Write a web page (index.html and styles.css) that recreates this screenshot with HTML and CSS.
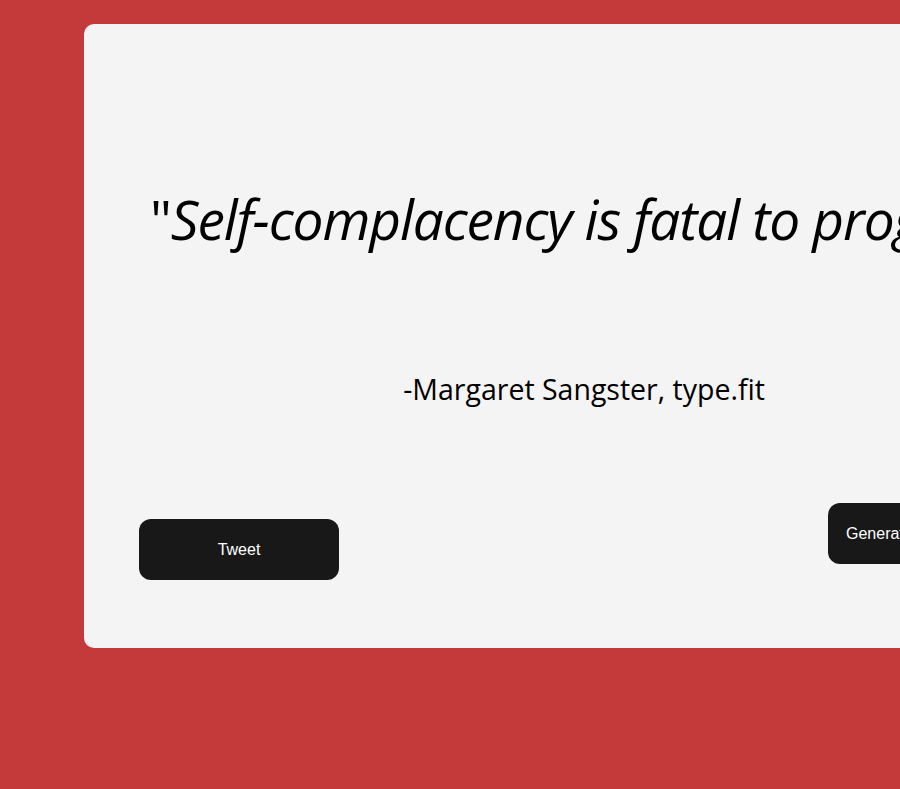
FILE: index.html
```html
<!DOCTYPE html>
<html lang="en">
<head>
<meta charset="utf-8">
<title>Random Quote</title>
<link rel="stylesheet" href="styles.css">
</head>
<body>
  <main class="card">
    <p class="quote">"<em>Self-complacency is fatal to progress."</em></p>
    <p class="author">-Margaret Sangster, type.fit</p>
    <div class="actions">
      <button class="btn btn-tweet">Tweet</button>
      <button class="btn btn-generate">Generate New Quote</button>
    </div>
  </main>
</body>
</html>
```
FILE: styles.css
```css
html, body {
  margin: 0;
  overflow: hidden;
}
body {
  background: #c43a3a;
  padding: 24px 0 0 84px;
  min-height: 789px;
  box-sizing: border-box;
}
.card {
  width: 1000px;
  height: 624px;
  box-sizing: border-box;
  background: #f4f4f4;
  border-radius: 10px;
  padding: 160px 55px 0;
  display: flex;
  flex-direction: column;
}
.quote {
  margin: 0 0 0 11px;
  font-family: "Open Sans", sans-serif;
  font-size: 55px;
  line-height: 70px;
  letter-spacing: -1.1px;
  color: #000;
  white-space: nowrap;
}
.quote em {
  font-style: italic;
}
.author {
  margin: 118px 0 0;
  font-family: "Open Sans", sans-serif;
  font-size: 28.5px;
  line-height: 34px;
  text-align: center;
  color: #000;
}
.actions {
  margin-top: 97px;
  display: flex;
  justify-content: space-between;
  align-items: flex-start;
}
.btn {
  width: 200px;
  height: 61px;
  border: none;
  border-radius: 12px;
  background: #181818;
  color: #fff;
  font-family: "Liberation Sans", Arial, sans-serif;
  font-size: 16px;
  cursor: pointer;
}
.btn-tweet {
  margin-top: 16px;
}
.btn-generate {
  margin-right: 1px;
  padding: 0 18px;
  text-align: left;
  white-space: nowrap;
}
```
